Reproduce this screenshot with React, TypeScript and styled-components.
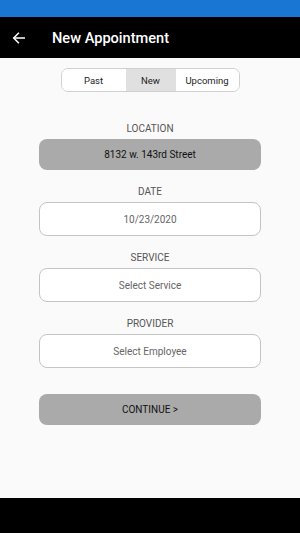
import React from "react";
import styled, { createGlobalStyle } from "styled-components";

const Global = createGlobalStyle`
  html, body { margin: 0; padding: 0; }
  body { font-family: Roboto, "Noto Sans", sans-serif; background: #fafafa; }
  * { box-sizing: border-box; }
`;

const Screen = styled.div`
  width: 300px;
  height: 533px;
  display: flex;
  flex-direction: column;
  background: #fafafa;
  overflow: hidden;
`;

const StatusBar = styled.div`
  height: 17px;
  background: #1976d2;
  flex: none;
`;

const AppBar = styled.div`
  height: 41px;
  background: #000;
  display: flex;
  align-items: center;
  padding-left: 12px;
  gap: 26px;
  flex: none;
`;

const BackButton = styled.div`
  width: 14px;
  height: 14px;
  display: flex;
  color: #fff;
`;

const Title = styled.h1`
  margin: 0;
  color: #fff;
  font-size: 14.6px;
  font-weight: 500;
  letter-spacing: 0;
`;

const Content = styled.main`
  flex: 1;
  display: flex;
  flex-direction: column;
  align-items: center;
  padding: 10px 39px 0 39px;
`;

const Segmented = styled.div`
  display: flex;
  height: 24px;
  width: 179px;
  border: 1px solid #d0d0d0;
  border-radius: 7px;
  overflow: hidden;
  background: #fff;
  margin-bottom: 31px;
`;

const Segment = styled.div<{ $w: number; $active?: boolean }>`
  width: ${(p) => p.$w}px;
  display: flex;
  align-items: center;
  justify-content: center;
  font-size: 9.5px;
  color: #222;
  background: ${(p) => (p.$active ? "#e0e0e0" : "#fff")};
`;

const Field = styled.section`
  width: 100%;
  display: flex;
  flex-direction: column;
  align-items: center;
  margin-bottom: 16px;
`;

const Label = styled.div`
  font-size: 10px;
  line-height: 12px;
  color: #555;
  text-transform: uppercase;
  margin-bottom: 4px;
`;

const Box = styled.div<{ $filled?: boolean; $h: number }>`
  width: 100%;
  height: ${(p) => p.$h}px;
  border-radius: 8px;
  display: flex;
  align-items: center;
  justify-content: center;
  font-size: 10px;
  background: ${(p) => (p.$filled ? "#aaaaaa" : "#fff")};
  border: ${(p) => (p.$filled ? "none" : "1px solid #c4c4c4")};
  color: ${(p) => (p.$filled ? "#111" : "#666")};
`;

const ContinueButton = styled.button`
  width: 100%;
  height: 31px;
  margin-top: 10px;
  border: none;
  border-radius: 8px;
  background: #aaaaaa;
  color: #111;
  font-family: Roboto, sans-serif;
  font-size: 10px;
  display: flex;
  align-items: center;
  justify-content: center;
`;

const NavBar = styled.div`
  height: 35px;
  background: #000;
  flex: none;
`;

export default function App() {
  return (
    <>
      <Global />
      <Screen>
        <StatusBar />
        <AppBar>
          <BackButton>
            <svg width="14" height="14" viewBox="0 0 24 24" fill="none" stroke="#fff" strokeWidth="2.6" strokeLinecap="square">
              <path d="M21 12H4" />
              <path d="M11 4l-8 8 8 8" />
            </svg>
          </BackButton>
          <Title>New Appointment</Title>
        </AppBar>
        <Content>
          <Segmented>
            <Segment $w={64}>Past</Segment>
            <Segment $w={50} $active>New</Segment>
            <Segment $w={63}>Upcoming</Segment>
          </Segmented>
          <Field>
            <Label>Location</Label>
            <Box $filled $h={31}>8132 w. 143rd Street</Box>
          </Field>
          <Field>
            <Label>Date</Label>
            <Box $h={34}>10/23/2020</Box>
          </Field>
          <Field>
            <Label>Service</Label>
            <Box $h={34}>Select Service</Box>
          </Field>
          <Field>
            <Label>Provider</Label>
            <Box $h={34}>Select Employee</Box>
          </Field>
          <ContinueButton>CONTINUE &gt;</ContinueButton>
        </Content>
        <NavBar />
      </Screen>
    </>
  );
}
